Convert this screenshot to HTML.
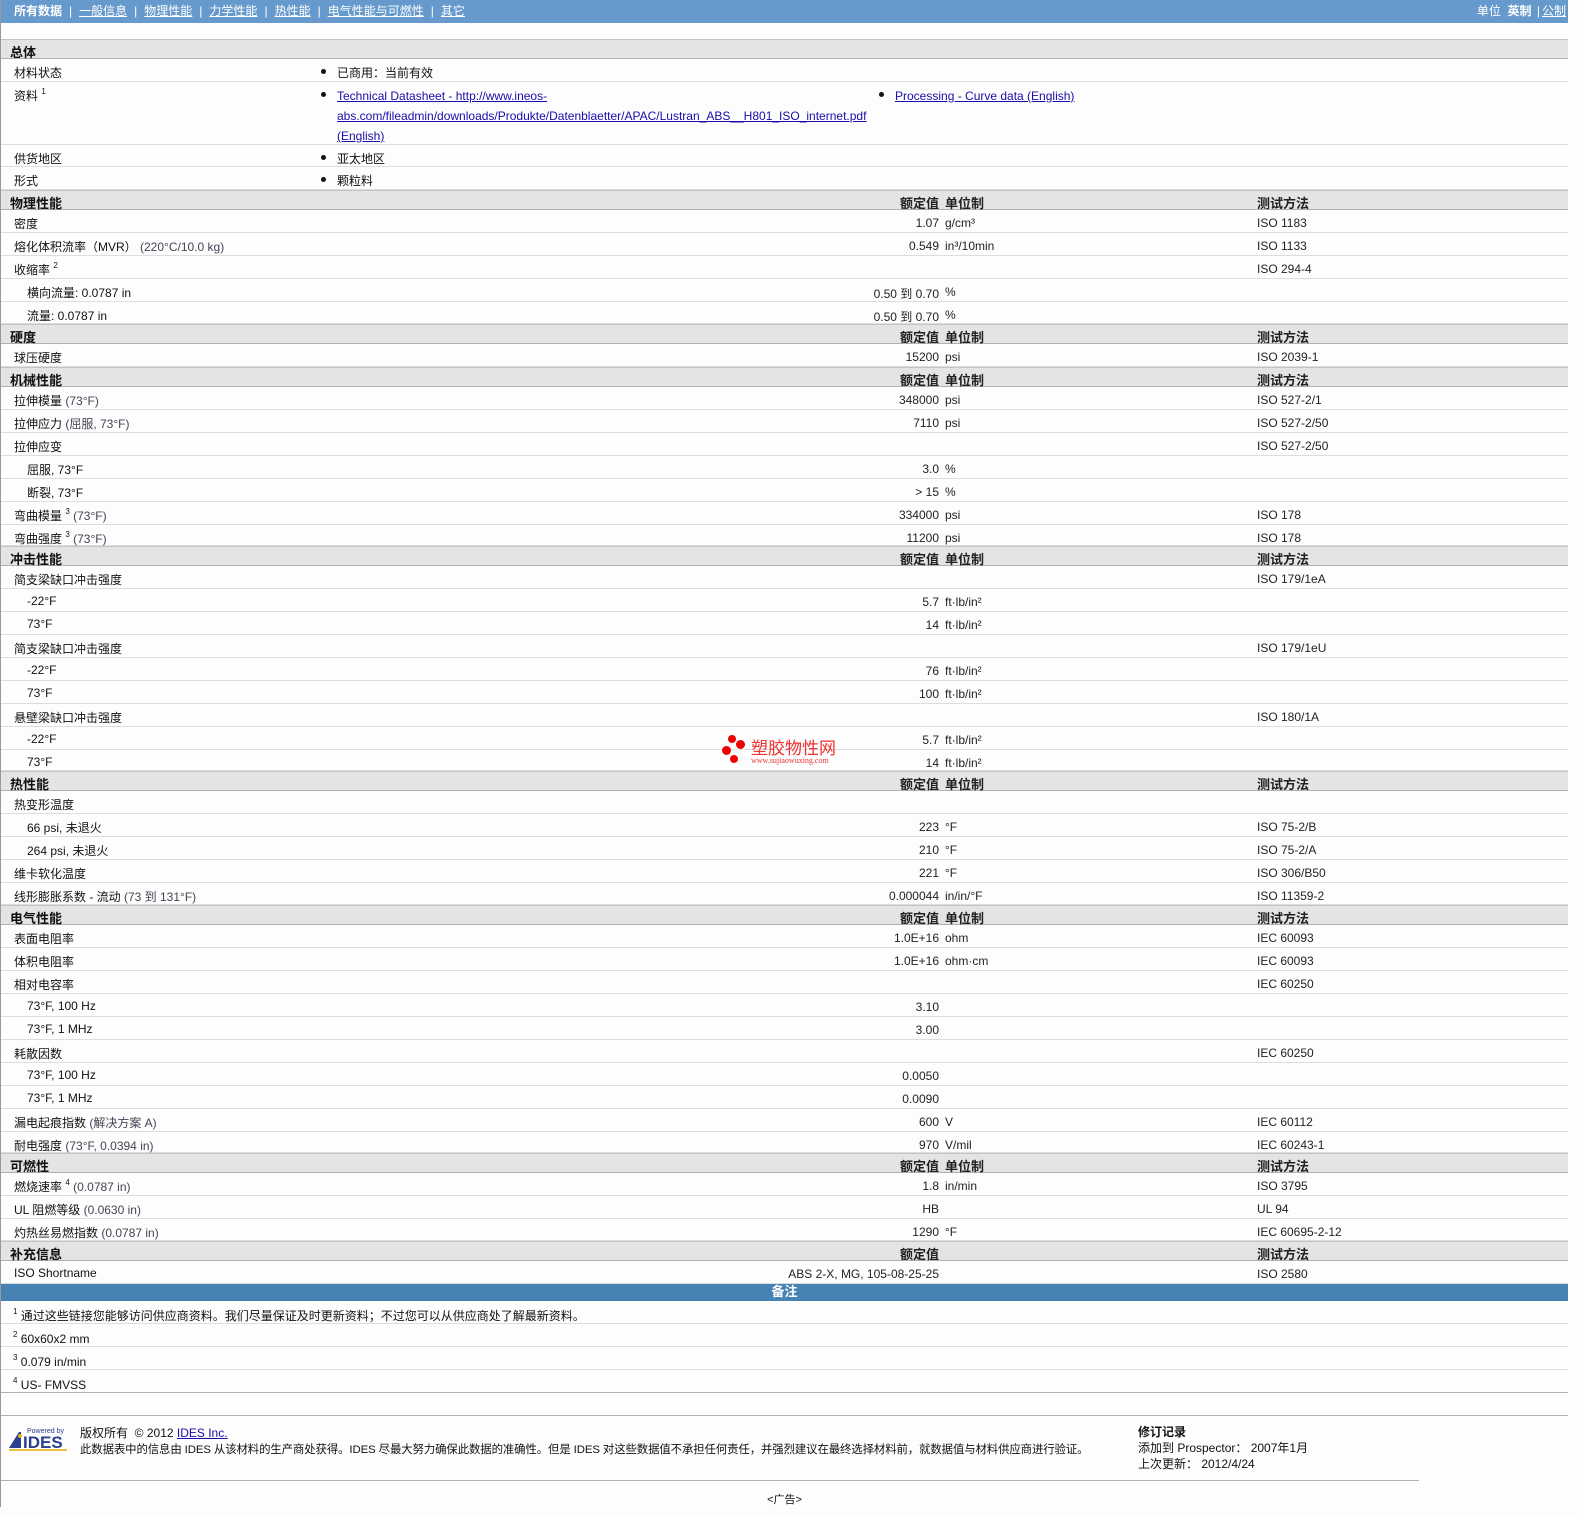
<!DOCTYPE html>
<html><head><meta charset="utf-8">
<style>
*{margin:0;padding:0;box-sizing:border-box}
body{width:1582px;height:1516px;background:#fcfdfc;font-family:"Liberation Sans","Noto Sans CJK SC",sans-serif;font-size:12px;color:#111;position:relative;overflow:hidden}
#wrap{position:absolute;left:0;top:0;width:1568px;border-left:1px solid #999}
.top{height:23px;background:#6699cc;color:#fff;font-size:12px;line-height:22px;padding-left:13px;position:relative}
.top a{color:#fff;text-decoration:underline}
.top b{font-weight:bold}
.top .sep{margin:0 7px}
.top .r{position:absolute;right:2px;top:0}
.blank{height:16px}
.row{position:relative;height:23px;border-bottom:1px solid #ddd;background:#fcfdfc}
.row.s{height:22px}.row.t{height:21px}
.h{position:relative;height:20px;background:#e4e4e4;border-top:1px solid #c4c4c4;border-bottom:1px solid #b0b0b0;font-weight:bold;font-size:13px}
.h .l{position:absolute;left:9px;top:2px}
.h .v{position:absolute;right:629px;top:2px}
.h .u{position:absolute;left:944px;top:2px}
.h .m{position:absolute;left:1256px;top:2px}
.l{position:absolute;left:13px;top:5px;white-space:nowrap}
.l.i{left:26px}
.v{position:absolute;right:629px;top:6px;white-space:nowrap;color:#222}
.u{position:absolute;left:944px;top:6px;white-space:nowrap;color:#222}
.m{position:absolute;left:1256px;top:6px;white-space:nowrap;color:#222}
.p{color:#445}
sup{font-size:8px;vertical-align:6px}
.b{position:absolute;top:4px;left:320px}
.b::before{content:"";position:absolute;left:0;top:6px;width:5px;height:5px;border-radius:50%;background:#111}
.b span{display:block;margin-left:16px;line-height:20px}
a{color:#1a0dab;text-decoration:underline}
.blue{height:17px;background:#4682b4;color:#fff;text-align:center;font-weight:bold;font-size:13px;line-height:16px}
.n{position:relative;height:23px;border-bottom:1px solid #ddd}
.n .l{left:12px;top:6px}
</style></head><body>
<div id="wrap">
<div class="top"><b>所有数据</b><span class="sep">|</span><a>一般信息</a><span class="sep">|</span><a>物理性能</a><span class="sep">|</span><a>力学性能</a><span class="sep">|</span><a>热性能</a><span class="sep">|</span><a>电气性能与可燃性</a><span class="sep">|</span><a>其它</a>
<span class="r">单位 &nbsp;<b>英制</b> <span style="margin:0 2px">|</span><a>公制</a></span></div>
<div class="blank"></div>
<div class="h"><span class="l">总体</span></div>
<div class="row"><span class="l">材料状态</span><div class="b"><span>已商用：当前有效</span></div></div>
<div class="row" style="height:63px"><span class="l">资料 <sup>1</sup></span><div class="b"><span><a>Technical Datasheet - http://www.ineos-<br>abs.com/fileadmin/downloads/Produkte/Datenblaetter/APAC/Lustran_ABS__H801_ISO_internet.pdf<br>(English)</a></span></div><div class="b" style="left:878px"><span><a>Processing - Curve data (English)</a></span></div></div>
<div class="row s"><span class="l">供货地区</span><div class="b"><span>亚太地区</span></div></div>
<div class="row"><span class="l">形式</span><div class="b"><span>颗粒料</span></div></div>

<div class="h"><span class="l">物理性能</span><span class="v">额定值</span><span class="u">单位制</span><span class="m">测试方法</span></div>
<div class="row"><span class="l">密度</span><span class="v">1.07</span><span class="u">g/cm³</span><span class="m">ISO 1183</span></div>
<div class="row"><span class="l">熔化体积流率（MVR） <span class="p">(220°C/10.0 kg)</span></span><span class="v">0.549</span><span class="u">in³/10min</span><span class="m">ISO 1133</span></div>
<div class="row"><span class="l">收缩率 <sup>2</sup></span><span class="m">ISO 294-4</span></div>
<div class="row"><span class="l i">横向流量: 0.0787 in</span><span class="v">0.50 到 0.70</span><span class="u">%</span></div>
<div class="row s"><span class="l i">流量: 0.0787 in</span><span class="v">0.50 到 0.70</span><span class="u">%</span></div>

<div class="h"><span class="l">硬度</span><span class="v">额定值</span><span class="u">单位制</span><span class="m">测试方法</span></div>
<div class="row"><span class="l">球压硬度</span><span class="v">15200</span><span class="u">psi</span><span class="m">ISO 2039-1</span></div>

<div class="h"><span class="l">机械性能</span><span class="v">额定值</span><span class="u">单位制</span><span class="m">测试方法</span></div>
<div class="row"><span class="l">拉伸模量 <span class="p">(73°F)</span></span><span class="v">348000</span><span class="u">psi</span><span class="m">ISO 527-2/1</span></div>
<div class="row"><span class="l">拉伸应力 <span class="p">(屈服, 73°F)</span></span><span class="v">7110</span><span class="u">psi</span><span class="m">ISO 527-2/50</span></div>
<div class="row"><span class="l">拉伸应变</span><span class="m">ISO 527-2/50</span></div>
<div class="row"><span class="l i">屈服, 73°F</span><span class="v">3.0</span><span class="u">%</span></div>
<div class="row"><span class="l i">断裂, 73°F</span><span class="v">&gt; 15</span><span class="u">%</span></div>
<div class="row"><span class="l">弯曲模量 <sup>3</sup> <span class="p">(73°F)</span></span><span class="v">334000</span><span class="u">psi</span><span class="m">ISO 178</span></div>
<div class="row t"><span class="l">弯曲强度 <sup>3</sup> <span class="p">(73°F)</span></span><span class="v">11200</span><span class="u">psi</span><span class="m">ISO 178</span></div>

<div class="h"><span class="l">冲击性能</span><span class="v">额定值</span><span class="u">单位制</span><span class="m">测试方法</span></div>
<div class="row"><span class="l">简支梁缺口冲击强度</span><span class="m">ISO 179/1eA</span></div>
<div class="row"><span class="l i">-22°F</span><span class="v">5.7</span><span class="u">ft·lb/in²</span></div>
<div class="row"><span class="l i">73°F</span><span class="v">14</span><span class="u">ft·lb/in²</span></div>
<div class="row"><span class="l">简支梁缺口冲击强度</span><span class="m">ISO 179/1eU</span></div>
<div class="row"><span class="l i">-22°F</span><span class="v">76</span><span class="u">ft·lb/in²</span></div>
<div class="row"><span class="l i">73°F</span><span class="v">100</span><span class="u">ft·lb/in²</span></div>
<div class="row"><span class="l">悬壁梁缺口冲击强度</span><span class="m">ISO 180/1A</span></div>
<div class="row"><span class="l i">-22°F</span><span class="v">5.7</span><span class="u">ft·lb/in²</span></div>
<div class="row t"><span class="l i">73°F</span><span class="v">14</span><span class="u">ft·lb/in²</span></div>

<div class="h"><span class="l">热性能</span><span class="v">额定值</span><span class="u">单位制</span><span class="m">测试方法</span></div>
<div class="row"><span class="l">热变形温度</span></div>
<div class="row"><span class="l i">66 psi, 未退火</span><span class="v">223</span><span class="u">°F</span><span class="m">ISO 75-2/B</span></div>
<div class="row"><span class="l i">264 psi, 未退火</span><span class="v">210</span><span class="u">°F</span><span class="m">ISO 75-2/A</span></div>
<div class="row"><span class="l">维卡软化温度</span><span class="v">221</span><span class="u">°F</span><span class="m">ISO 306/B50</span></div>
<div class="row s"><span class="l">线形膨胀系数 - 流动 <span class="p">(73 到 131°F)</span></span><span class="v">0.000044</span><span class="u">in/in/°F</span><span class="m">ISO 11359-2</span></div>

<div class="h"><span class="l">电气性能</span><span class="v">额定值</span><span class="u">单位制</span><span class="m">测试方法</span></div>
<div class="row"><span class="l">表面电阻率</span><span class="v">1.0E+16</span><span class="u">ohm</span><span class="m">IEC 60093</span></div>
<div class="row"><span class="l">体积电阻率</span><span class="v">1.0E+16</span><span class="u">ohm·cm</span><span class="m">IEC 60093</span></div>
<div class="row"><span class="l">相对电容率</span><span class="m">IEC 60250</span></div>
<div class="row"><span class="l i">73°F, 100 Hz</span><span class="v">3.10</span></div>
<div class="row"><span class="l i">73°F, 1 MHz</span><span class="v">3.00</span></div>
<div class="row"><span class="l">耗散因数</span><span class="m">IEC 60250</span></div>
<div class="row"><span class="l i">73°F, 100 Hz</span><span class="v">0.0050</span></div>
<div class="row"><span class="l i">73°F, 1 MHz</span><span class="v">0.0090</span></div>
<div class="row"><span class="l">漏电起痕指数 <span class="p">(解决方案 A)</span></span><span class="v">600</span><span class="u">V</span><span class="m">IEC 60112</span></div>
<div class="row t"><span class="l">耐电强度 <span class="p">(73°F, 0.0394 in)</span></span><span class="v">970</span><span class="u">V/mil</span><span class="m">IEC 60243-1</span></div>

<div class="h"><span class="l">可燃性</span><span class="v">额定值</span><span class="u">单位制</span><span class="m">测试方法</span></div>
<div class="row"><span class="l">燃烧速率 <sup>4</sup> <span class="p">(0.0787 in)</span></span><span class="v">1.8</span><span class="u">in/min</span><span class="m">ISO 3795</span></div>
<div class="row"><span class="l">UL 阻燃等级 <span class="p">(0.0630 in)</span></span><span class="v">HB</span><span class="m">UL 94</span></div>
<div class="row s"><span class="l">灼热丝易燃指数 <span class="p">(0.0787 in)</span></span><span class="v">1290</span><span class="u">°F</span><span class="m">IEC 60695-2-12</span></div>

<div class="h"><span class="l">补充信息</span><span class="v">额定值</span><span class="m">测试方法</span></div>
<div class="row"><span class="l">ISO Shortname</span><span class="v">ABS 2-X, MG, 105-08-25-25</span><span class="m">ISO 2580</span></div>
<div class="blue">备注</div>
<div class="n"><span class="l"><sup>1</sup> 通过这些链接您能够访问供应商资料。我们尽量保证及时更新资料；不过您可以从供应商处了解最新资料。</span></div>
<div class="n"><span class="l"><sup>2</sup> 60x60x2 mm</span></div>
<div class="n"><span class="l"><sup>3</sup> 0.079 in/min</span></div>
<div class="n" style="border-bottom:1px solid #b0b0b0"><span class="l"><sup>4</sup> US- FMVSS</span></div>
<div style="height:23px;border-bottom:1px solid #b0b0b0"></div>
<div style="position:relative;height:65px;width:1418px;border-bottom:1px solid #b0b0b0">
  <svg style="position:absolute;left:6px;top:10px" width="64" height="26" viewBox="0 0 64 26">
    <text x="20" y="7" font-size="7" fill="#2a3f8f" font-family="Liberation Sans">Powered by</text>
    <polygon points="2,22 12,6 14,6 14,22" fill="#2a3f8f"/>
    <circle cx="13" cy="10" r="2" fill="#e8b020"/>
    <text x="16" y="22" font-size="17" font-weight="bold" fill="#2a3f8f" font-family="Liberation Sans">IDES</text>
    <rect x="2" y="23" width="58" height="2" fill="#e8c040"/>
  </svg>
  <div style="position:absolute;left:79px;top:9px;line-height:16px;white-space:nowrap">版权所有 &nbsp;© 2012 <a>IDES Inc.</a><br><span style="font-size:11.4px;letter-spacing:-0.1px">此数据表中的信息由 IDES 从该材料的生产商处获得。IDES 尽最大努力确保此数据的准确性。但是 IDES 对这些数据值不承担任何责任，并强烈建议在最终选择材料前，就数据值与材料供应商进行验证。</span></div>
  <div style="position:absolute;left:1137px;top:8px;line-height:16px"><b>修订记录</b><br>添加到 Prospector： 2007年1月<br>上次更新： 2012/4/24</div>
</div>
<div style="text-align:center;padding-top:10px;font-size:11px">&lt;广告&gt;</div>
</div>
<div style="position:absolute;left:722px;top:735px;width:130px;height:34px">
  <div style="position:absolute;left:6px;top:0;width:8px;height:8px;border-radius:50%;background:#e00"></div>
  <div style="position:absolute;left:14px;top:5px;width:9px;height:9px;border-radius:50%;background:#e00"></div>
  <div style="position:absolute;left:0;top:11px;width:9px;height:9px;border-radius:50%;background:#e00"></div>
  <div style="position:absolute;left:8px;top:20px;width:8px;height:8px;border-radius:50%;background:#e00"></div>
  <div style="position:absolute;left:29px;top:2px;font-size:17px;color:#e33;font-family:'Noto Sans CJK SC',sans-serif;line-height:20px">塑胶物性网</div>
  <div style="position:absolute;left:29px;top:21px;font-size:8px;color:#e33;font-family:'Liberation Serif',serif">www.sujiaowuxing.com</div>
</div>
</body></html>
